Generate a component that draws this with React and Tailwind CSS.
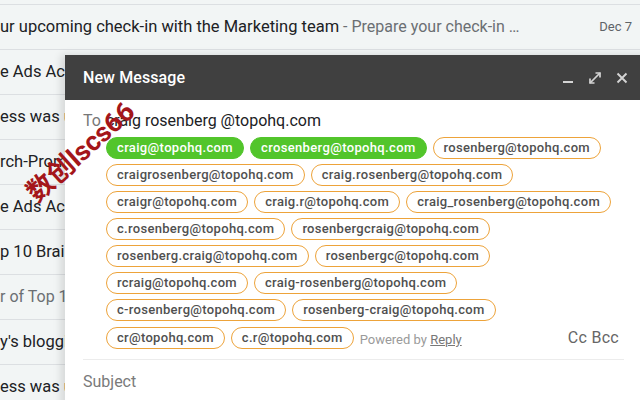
import { useState } from 'react'

const FONT = { fontFamily: 'Roboto, "Noto Sans", Arial, sans-serif' }

const rows = [
  { main: 'ur upcoming check-in with the Marketing team', snippet: ' - Prepare your check-in …', date: 'Dec 7' },
  { main: 'e Ads Account Performance Report', snippet: '' },
  { main: 'ess was updated for your site', snippet: '' },
  { main: 'rch-Promotion Results are in', snippet: '' },
  { main: 'e Ads Account Performance Report', snippet: '' },
  { main: 'p 10 Brainstorm Ideas for this week', snippet: '' },
  { main: '', snippet: 'r of Top 10 Brainstorm Ideas' },
  { main: "y's blogging tips for marketers", snippet: '' },
  { main: 'ess was updated for your site', snippet: '' },
]

const chipRows = [
  [['craig@topohq.com', true], ['crosenberg@topohq.com', true], ['rosenberg@topohq.com']],
  [['craigrosenberg@topohq.com'], ['craig.rosenberg@topohq.com']],
  [['craigr@topohq.com'], ['craig.r@topohq.com'], ['craig_rosenberg@topohq.com']],
  [['c.rosenberg@topohq.com'], ['rosenbergcraig@topohq.com']],
  [['rosenberg.craig@topohq.com'], ['rosenbergc@topohq.com']],
  [['rcraig@topohq.com'], ['craig-rosenberg@topohq.com']],
  [['c-rosenberg@topohq.com'], ['rosenberg-craig@topohq.com']],
  [['cr@topohq.com'], ['c.r@topohq.com']],
]

function Chip({ label, picked }) {
  return picked ? (
    <span className="h-[22px] px-[10px] rounded-full bg-[#52c52b] text-white text-[13px] font-medium tracking-[0.35px] flex items-center border-[1.5px] border-[#52c52b]">
      {label}
    </span>
  ) : (
    <span className="h-[22px] px-[10px] rounded-full border-[1.5px] border-[#eda33a] text-[#505050] text-[13px] font-medium tracking-[0.3px] flex items-center bg-white">
      {label}
    </span>
  )
}

export default function App() {
  const [to] = useState('craig rosenberg @topohq.com')

  return (
    <div className="relative w-[640px] h-[400px] overflow-hidden bg-[#f2f5f5]" style={FONT}>
      {/* inbox rows behind the compose window */}
      <div className="pt-[4px] border-b border-[#dcdfe2]">
        {rows.map((r, i) => (
          <div key={i} className="h-[45px] border-t border-[#dcdfe2] flex items-center whitespace-nowrap overflow-hidden">
            <span className="text-[16.5px] text-[#202124]">{r.main}</span>
            {r.snippet && <span className="text-[16px] text-[#6b6f73] whitespace-pre">{r.snippet}</span>}
            {r.date && <span className="ml-auto mr-[8px] text-[13px] text-[#5f6368]">{r.date}</span>}
          </div>
        ))}
      </div>

      {/* compose window */}
      <div className="absolute left-[65px] top-[55px] w-[600px] h-[360px] bg-white shadow-[-4px_0_8px_rgba(0,0,0,0.12)]">
        <div className="h-[45px] bg-[#404040] flex items-center pl-[18px] pr-[16px]">
          <span className="text-white text-[16px] font-medium tracking-[0.1px]">New Message</span>
          <div className="ml-auto mr-[20px] flex items-center gap-[12px] text-[#d4d4d4]">
            <svg width="14" height="14" viewBox="0 0 14 14">
              <rect x="2" y="10" width="10" height="2" fill="currentColor" />
            </svg>
            <svg width="16" height="16" viewBox="0 0 16 16" fill="none" stroke="currentColor" strokeWidth="1.7">
              <path d="M3 13 L13 3" />
              <path d="M8.5 3 H13 V7.5" />
              <path d="M3 8.5 V13 H7.5" />
            </svg>
            <svg width="14" height="14" viewBox="0 0 14 14" fill="none" stroke="currentColor" strokeWidth="1.9">
              <path d="M2.5 2.5 L11.5 11.5 M11.5 2.5 L2.5 11.5" />
            </svg>
          </div>
        </div>

        <div className="pl-[18px] w-[559px]">
          <div className="h-[41px] flex items-center text-[16px]">
            <span className="text-[#777]">To</span>
            <span className="ml-[5px] text-[#202124]">{to}</span>
          </div>
          <div className="pl-[23px] flex flex-col gap-[5px] -mt-[4px]">
            {chipRows.map((row, i) => (
              <div key={i} className="flex items-center gap-[6px]">
                {row.map(([label, picked]) => (
                  <Chip key={label} label={label} picked={picked} />
                ))}
                {i === chipRows.length - 1 && (
                  <>
                    <span className="mt-[4px] text-[13px] text-[#9a9a9a]">
                      Powered by <span className="text-[#777] underline">Reply</span>
                    </span>
                    <span className="ml-auto mr-[5px] text-[16px] text-[#666] tracking-[0.3px]">Cc Bcc</span>
                  </>
                )}
              </div>
            ))}
          </div>
          <div className="mt-[9px] border-t border-[#ececec] h-[42px] pt-[2px] flex items-center">
            <span className="text-[16px] text-[#7a7a7a]">Subject</span>
          </div>
          <div className="border-t border-[#ececec]" />
        </div>
      </div>

      {/* watermark */}
      <div
        className="absolute left-[14px] top-[132px] text-[27px] font-bold text-[#a4161a] whitespace-nowrap -rotate-[42deg] origin-center"
        style={{ fontFamily: 'Roboto, "Noto Sans CJK SC", sans-serif' }}
      >
        数创lscs66
      </div>
    </div>
  )
}
